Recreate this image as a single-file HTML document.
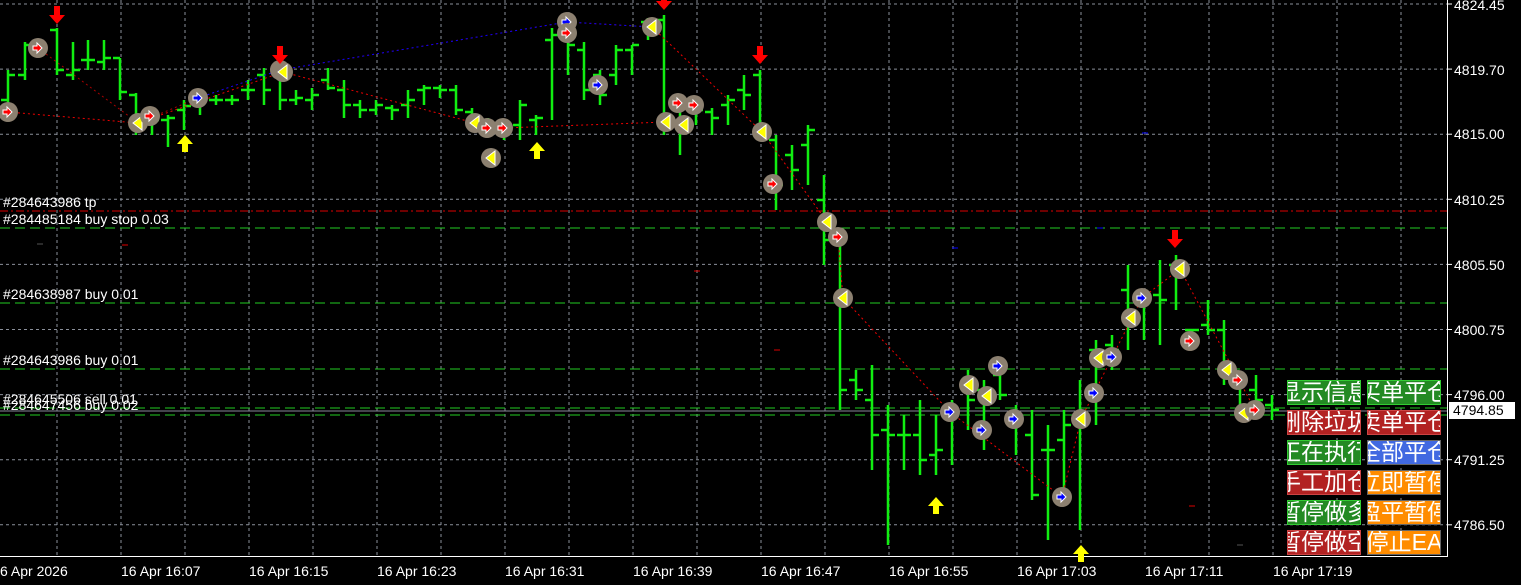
<!DOCTYPE html>
<html><head><meta charset="utf-8"><style>
body{margin:0;background:#000;width:1521px;height:585px;overflow:hidden;font-family:"Liberation Sans","Noto Sans CJK SC",sans-serif}
#c{position:absolute;left:0;top:0}
.lbl{position:absolute;color:#fff;font-size:14px;white-space:nowrap;font-family:"Liberation Sans",sans-serif}
.ax{position:absolute;left:1454px;color:#fff;font-size:14px}
.t{position:absolute;top:563px;color:#fff;font-size:14px;white-space:nowrap}
.b{position:absolute;width:72px;height:23px;overflow:hidden;border:1px solid #666;color:#fff;font-size:23px;line-height:23px;text-align:center;white-space:nowrap;display:flex;justify-content:center}
.g{background:#238a23;border-color:#3c3}.r{background:#b22222;border-color:#c44}.bl{background:#4169e1}.o{background:#ff8c00}
</style></head><body>
<svg id="c" width="1521" height="585" xmlns="http://www.w3.org/2000/svg"></svg>
<div class="lbl" style="left:3px;top:194px">#284643986 tp</div>
<div class="lbl" style="left:3px;top:211px">#284485184 buy stop 0.03</div>
<div class="lbl" style="left:3px;top:286px">#284638987 buy 0.01</div>
<div class="lbl" style="left:3px;top:352px">#284643986 buy 0.01</div>
<div class="lbl" style="left:3px;top:391px">#284645506 sell 0.01</div>
<div class="lbl" style="left:3px;top:397px">#284647456 buy 0.02</div>
<div class="ax" style="top:-3px">4824.45</div>
<div class="ax" style="top:62px">4819.70</div>
<div class="ax" style="top:126px">4815.00</div>
<div class="ax" style="top:192px">4810.25</div>
<div class="ax" style="top:257px">4805.50</div>
<div class="ax" style="top:322px">4800.75</div>
<div class="ax" style="top:387px">4796.00</div>
<div class="ax" style="top:452px">4791.25</div>
<div class="ax" style="top:517px">4786.50</div>
<div style="position:absolute;left:1449px;top:402px;width:62px;height:17px;background:#fff;color:#000;font-size:14px;line-height:17px;padding-left:4px">4794.85</div>
<div class="t" style="left:0">6 Apr 2026</div>
<div class="t" style="left:121px">16 Apr 16:07</div>
<div class="t" style="left:249px">16 Apr 16:15</div>
<div class="t" style="left:377px">16 Apr 16:23</div>
<div class="t" style="left:505px">16 Apr 16:31</div>
<div class="t" style="left:633px">16 Apr 16:39</div>
<div class="t" style="left:761px">16 Apr 16:47</div>
<div class="t" style="left:889px">16 Apr 16:55</div>
<div class="t" style="left:1017px">16 Apr 17:03</div>
<div class="t" style="left:1145px">16 Apr 17:11</div>
<div class="t" style="left:1273px">16 Apr 17:19</div>
<div class="b g" style="left:1287px;top:380px"><span>显示信息</span></div>
<div class="b g" style="left:1367px;top:380px"><span>买单平仓</span></div>
<div class="b r" style="left:1287px;top:410px"><span>删除垃圾</span></div>
<div class="b r" style="left:1367px;top:410px"><span>卖单平仓</span></div>
<div class="b g" style="left:1287px;top:440px"><span>正在执行</span></div>
<div class="b bl" style="left:1367px;top:440px"><span>全部平仓</span></div>
<div class="b r" style="left:1287px;top:470px"><span>手工加仓</span></div>
<div class="b o" style="left:1367px;top:470px"><span>立即暂停</span></div>
<div class="b g" style="left:1287px;top:500px"><span>暂停做多</span></div>
<div class="b o" style="left:1367px;top:500px"><span>盈平暂停</span></div>
<div class="b r" style="left:1287px;top:530px"><span>暂停做空</span></div>
<div class="b o" style="left:1367px;top:530px"><span>停止EA</span></div>
<script>
var s='';
for(var x=57;x<1447;x+=64)s+='<line x1="'+x+'" y1="0" x2="'+x+'" y2="556" stroke="#8a8f9a" stroke-dasharray="3,3"/>';
for(var i=0;i<9;i++){var y=4+i*65.1;s+='<line x1="0" y1="'+y+'" x2="1447" y2="'+y+'" stroke="#8a8f9a" stroke-dasharray="3,3"/><line x1="1447" y1="'+y+'" x2="1452" y2="'+y+'" stroke="#fff"/>';}
s+='<line x1="0" y1="211" x2="1447" y2="211" stroke="#d00" stroke-dasharray="8,3,2,3"/>';
[228,303,369,408,415].forEach(function(y){s+='<line x1="0" y1="'+y+'" x2="1447" y2="'+y+'" stroke="#2c2" stroke-dasharray="10,5"/>';});
s+='<line x1="0" y1="411" x2="1447" y2="411" stroke="#889"/>';
s+='<line x1="1447.5" y1="0" x2="1447.5" y2="557" stroke="#fff"/><line x1="0" y1="556.5" x2="1448" y2="556.5" stroke="#fff"/>';
var B=[[8,70,115,100,75],[25,42,80,75,45],[57,28,75,30,70],[73,42,80,75,70],[88,40,70,60,60],[104,40,70,62,58],[120,58,100,58,92],[136,93,135,95,130],[152,108,135,118,120],[168,115,147,120,118],[184,100,130,110,106],[200,90,115,100,100],[216,95,105,100,100],[232,95,105,100,100],[248,80,100,90,90],[264,68,105,75,90],[280,60,110,68,100],[296,90,105,100,98],[312,88,110,100,95],[328,68,90,80,88],[344,80,118,90,105],[360,100,118,105,110],[376,100,115,110,105],[392,105,120,108,110],[408,90,118,105,100],[424,85,105,90,88],[440,85,98,88,90],[456,85,115,90,110],[472,108,125,112,120],[488,118,130,120,125],[504,120,140,122,125],[520,100,140,125,105],[536,115,135,120,118],[552,28,120,40,35],[568,20,75,25,45],[584,42,100,50,90],[600,70,105,75,95],[616,45,85,75,50],[632,45,75,50,45],[648,18,40,22,20],[664,15,135,20,120],[680,100,155,105,120],[696,100,125,105,110],[712,108,135,112,118],[728,95,125,105,100],[744,75,110,90,95],[760,70,135,75,130],[776,135,210,140,185],[792,145,190,155,170],[808,125,185,145,130],[824,175,265,200,240],[840,235,410,240,390],[856,370,400,380,390],[872,365,470,400,435],[888,405,545,430,435],[904,415,470,435,435],[920,400,475,435,460],[936,415,475,455,450],[952,400,465,415,410],[968,370,430,385,400],[984,380,450,390,430],[1000,365,400,375,395],[1016,405,455,415,420],[1032,410,500,435,495],[1048,425,540,450,450],[1064,410,505,440,425],[1080,380,530,420,420],[1096,340,425,350,390],[1112,335,370,345,350],[1128,265,350,290,325],[1144,290,340,300,298],[1160,260,345,295,300],[1176,255,310,265,275],[1192,330,345,330,330],[1208,300,335,325,330],[1224,320,385,330,375],[1240,375,410,380,405],[1256,375,410,390,400],[1272,395,420,405,410]];
B.forEach(function(b){s+='<g stroke="#1e1" stroke-width="2.5"><line x1="'+b[0]+'" y1="'+b[1]+'" x2="'+b[0]+'" y2="'+b[2]+'"/><line x1="'+(b[0]-7)+'" y1="'+b[3]+'" x2="'+b[0]+'" y2="'+b[3]+'"/><line x1="'+b[0]+'" y1="'+b[4]+'" x2="'+(b[0]+7)+'" y2="'+b[4]+'"/></g>';});
s+='<polyline points="8,112 138,123 283,72 475,123 487,128 503,128 666,122" fill="none" stroke="#e00" stroke-dasharray="2,3"/>';
s+='<polyline points="38,48 138,123 198,98 280,70 567,22 652,27" fill="none" stroke="#e00" stroke-dasharray="2,3" opacity=".7"/>';
s+='<polyline points="198,98 280,70 567,22 652,27" fill="none" stroke="#00f" stroke-dasharray="2,3"/>';
s+='<polyline points="652,27 762,132 838,237 843,298 950,412 1062,497 1081,419 1142,298 1180,269 1255,410" fill="none" stroke="#e00" stroke-dasharray="2,3"/>';
var C=[[8,112,'r'],[38,48,'r'],[138,123,'y'],[150,116,'r'],[198,98,'b'],[280,70,'r'],[283,72,'y'],[475,123,'y'],[487,128,'r'],[491,158,'y'],[503,128,'r'],[567,22,'b'],[567,33,'r'],[598,85,'b'],[652,27,'y'],[666,122,'y'],[678,103,'r'],[684,125,'y'],[694,105,'r'],[762,132,'y'],[773,184,'r'],[827,222,'y'],[838,237,'r'],[843,298,'y'],[950,412,'b'],[969,385,'y'],[982,430,'b'],[987,396,'y'],[998,366,'b'],[1014,419,'b'],[1062,497,'b'],[1081,419,'y'],[1094,393,'b'],[1099,358,'y'],[1112,357,'b'],[1131,318,'y'],[1142,298,'b'],[1180,269,'y'],[1190,341,'r'],[1227,370,'y'],[1238,380,'r'],[1244,413,'y'],[1255,410,'r']];
var col={r:'#f00',b:'#00f',y:'#ff0'};
C.forEach(function(c){s+='<circle cx="'+c[0]+'" cy="'+c[1]+'" r="10" fill="#8c8070"/>';
 if(c[2]=='y')s+='<path d="M'+(c[0]+4)+' '+(c[1]-7)+'L'+(c[0]-5)+' '+c[1]+'L'+(c[0]+4)+' '+(c[1]+7)+'Z" fill="#ff0" stroke="#fff"/>';
 else s+='<path d="M'+(c[0]-5)+' '+(c[1]-2)+'h4v-3l5 5l-5 5v-3h-4z" fill="'+col[c[2]]+'" stroke="#fff"/>';});
[[57,6],[280,46],[760,46],[664,-8],[1175,230]].forEach(function(a){var x=a[0],y=a[1];s+='<path d="M'+(x-3)+' '+y+'h6v9h5l-8 9l-8-9h5z" fill="#f00"/>';});
[[185,152],[537,159],[936,514],[1081,562]].forEach(function(a){var x=a[0],y=a[1];s+='<path d="M'+(x-3)+' '+y+'h6v-8h5l-8-9l-8 9h5z" fill="#ff0"/>';});
[[40,244,'#555'],[125,245,'#d00'],[697,271,'#d00'],[777,350,'#d00'],[1192,506,'#d00'],[1240,545,'#555'],[955,248,'#00f'],[1145,133,'#00f'],[1100,228,'#00f']].forEach(function(d){s+='<line x1="'+(d[0]-3)+'" y1="'+d[1]+'" x2="'+(d[0]+3)+'" y2="'+d[1]+'" stroke="'+d[2]+'"/>';});
document.getElementById('c').innerHTML=s;
</script>
</body></html>
